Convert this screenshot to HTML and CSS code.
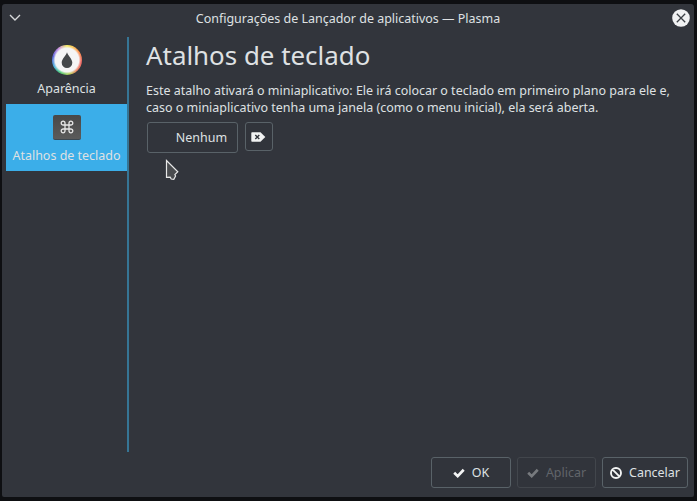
FILE: index.html
```html
<!DOCTYPE html>
<html lang="pt-BR">
<head>
<meta charset="utf-8">
<title>Configurações de Lançador de aplicativos — Plasma</title>
<link rel="stylesheet" href="styles.css">
</head>
<body>
<div class="window">
  <header class="titlebar">
    <svg class="chevron" width="12" height="8" viewBox="0 0 12 8"><path d="M1 1l5 5 5-5"/></svg>
    <span class="caption">Configurações de Lançador de aplicativos — Plasma</span>
    <svg class="close" width="18" height="18" viewBox="0 0 18 18"><circle cx="9" cy="9" r="8.8"/><path d="M4.800 4.800l8.400 8.400M13.200 4.800l-8.400 8.400"/></svg>
  </header>
  <div class="body">
    <nav class="sidebar">
      <a class="item">
        <span class="wheel"><svg width="26" height="26" viewBox="0 0 26 26"><path d="M13 5.200C12.200 8.700 7.700 11.700 7.700 15.700a5.300 5.300 0 0 0 10.600 0C18.300 11.700 13.800 8.700 13 5.200z"/></svg></span>
        <span>Aparência</span>
      </a>
      <a class="item selected">
        <span class="key"><svg width="14" height="14" viewBox="0 0 14 14"><path d="M5 5h4v4H5zM5 5H3.200A1.900 1.900 0 1 1 5 3.200zM9 5V3.200A1.900 1.900 0 1 1 10.800 5zM9 9h1.800A1.900 1.900 0 1 1 9 10.800zM5 9v1.800A1.900 1.900 0 1 1 3.200 9z"/></svg></span>
        <span>Atalhos de teclado</span>
      </a>
    </nav>
    <main class="content">
      <h1>Atalhos de teclado</h1>
      <p>Este atalho ativará o miniaplicativo: Ele irá colocar o teclado em primeiro plano para ele e,<br>caso o miniaplicativo tenha uma janela (como o menu inicial), ela será aberta.</p>
      <div class="shortcut">
        <button class="btn sequence">Nenhum</button>
        <button class="btn clear" aria-label="Limpar"><svg width="15" height="10" viewBox="0 0 15 10"><path class="tag" d="M1 .3h8.500L14.300 5 9.500 9.700H1q-.7 0-.7-.7V1Q.3.3 1 .3z"/><path class="x" d="M4.300 3l4 4M8.300 3l-4 4"/></svg></button>
      </div>
    </main>
  </div>
  <footer class="actions">
    <button class="btn ok"><svg width="12" height="10" viewBox="0 0 12 10"><path class="check" d="M1.200 4.700l3.500 3.400 6-6.300"/></svg><span>OK</span></button>
    <button class="btn apply" disabled><svg width="12" height="10" viewBox="0 0 12 10"><path class="check" d="M1.200 4.700l3.500 3.400 6-6.300"/></svg><span>Aplicar</span></button>
    <button class="btn cancel"><svg width="12" height="12" viewBox="0 0 12 12"><path class="ban" d="M11 6A5 5 0 1 1 1 6a5 5 0 0 1 10 0zM2.600 2.600l6.800 6.800"/></svg><span>Cancelar</span></button>
  </footer>
</div>
<svg class="cursor" width="14" height="22" viewBox="0 0 14 22"><path d="M1.500 1.500v16.800l3.700-.2 1 1.900 2.600.4 1.800-3.400-.7-1.300 2.900-3z"/></svg>
</body>
</html>
```
FILE: styles.css
```css
* { box-sizing: border-box; }
body {
  margin: 0;
  width: 697px;
  height: 501px;
  padding: 4px 3px 4px 2px;
  background: #0e0f12;
  color: #dfe1e3;
  font: 12.48px/17px "Noto Sans", sans-serif;
  overflow: hidden;
}
svg { display: block; fill: none; flex: none; }
.window {
  display: flex;
  flex-direction: column;
  height: 493px;
  background: #32353c;
  border-radius: 3px 3px 2px 2px;
}
.titlebar {
  display: flex;
  align-items: center;
  height: 33px;
  padding: 0 4px 5px 7px;
}
.chevron { stroke: #d6d8da; stroke-width: 1.4; }
.caption { flex: 1; text-align: center; padding-left: 3px; white-space: nowrap; }
.close circle { fill: #f0f1f2; }
.close path { stroke: #3c4046; stroke-width: 1.3; }
.body { display: flex; height: 415px; padding-left: 4px; }
.sidebar { width: 123px; border-right: 2px solid #367595; }
.item {
  display: flex;
  flex-direction: column;
  align-items: center;
  height: 67px;
  padding-top: 8px;
  gap: 5px;
  white-space: nowrap;
}
.selected { background: #3baee9; padding-top: 11px; gap: 7px; }
.wheel {
  flex: none;
  width: 30px;
  height: 30px;
  padding: 2px;
  border-radius: 50%;
  background:
    radial-gradient(circle closest-side, #f5f5f5 0 11.8px, transparent 14px),
    conic-gradient(#f4ed65, #ff9d52, #f16b68 100deg, #ed8b67 140deg, #b9d35b 170deg, #4cc87b 210deg, #54b9df 240deg, #6268dd 285deg, #cc91e2 325deg, #f4ed65);
}
.wheel path { fill: #45484a; }
.key {
  display: flex;
  align-items: center;
  justify-content: center;
  flex: none;
  width: 28px;
  height: 25px;
  border-radius: 2px;
  background: linear-gradient(#484848, #5b5b5b);
  border-bottom: 1px solid #3c4852;
}
.key path { stroke: #e6e6e6; stroke-width: 1.3; }
.content { flex: 1; padding-left: 17px; }
h1 { margin: 0; font-size: 25.9px; line-height: 36px; font-weight: 400; white-space: nowrap; }
p { margin: 9px 0 6px; white-space: nowrap; }
.shortcut { display: flex; gap: 7px; padding-left: 1px; }
.btn {
  display: flex;
  align-items: center;
  justify-content: center;
  height: 31px;
  padding: 0;
  border: 1px solid #596268;
  border-radius: 3px;
  background: #31343b;
  color: inherit;
  font: inherit;
}
.sequence { width: 91px; padding-left: 18px; }
.clear { width: 28px; height: 29px; padding-right: 1px; }
.tag { fill: #f1f2f2; }
.x { stroke: #30343a; stroke-width: 1.4; }
.actions { display: flex; justify-content: flex-end; gap: 6px; padding: 5px 6px 0 0; }
.ok { width: 80px; gap: 7px; }
.apply { width: 79px; gap: 7px; color: #61656a; border-color: #42464c; }
.cancel { width: 86px; gap: 7px; }
.check, .ban { stroke: #f3f4f4; stroke-width: 2.7; }
.ban { stroke-width: 1.9; }
.apply .check { stroke: #777a7e; }
.cursor { position: absolute; left: 165px; top: 159px; }
.cursor path { fill: #4a4c4f; stroke: #e8e8e8; stroke-width: 1.2; }
```
